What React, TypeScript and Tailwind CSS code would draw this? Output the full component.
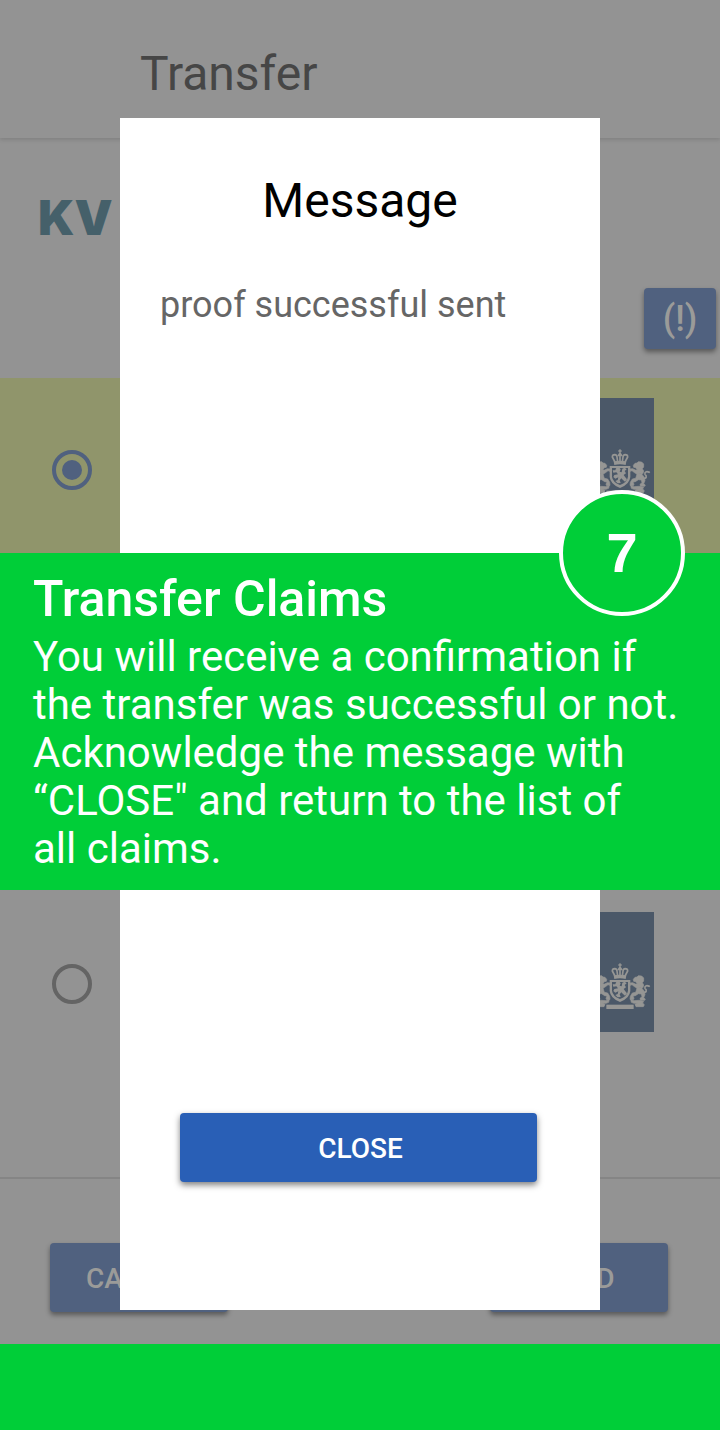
import type { ReactNode } from "react";

function LionSide() {
  return (
    <g stroke="currentColor" strokeWidth="2">
      <path d="M106 58 L111 52 L117 51 L121 47 L131 48 L137 54 L137 63 L133 68 L137 75 L135 82 L130 87 L126 82 L119 86 L108 79 L102 74 L97 76 L96 69 L104 68 L112 72 L118 72 L113 65 L107 64 Z" />
      <path d="M118 82 L130 84 L138 92 L141 104 L137 113 L142 117 L140 121 L127 121 L126 115 L132 110 L130 102 L121 101 L112 107 L105 108 L108 115 L106 119 L96 118 L97 109 L103 99 L113 97 Z" />
      <path d="M134 98 C147 98 147 90 141 85 C139 78 146 75 153 79 L155 77" fill="none" strokeWidth="5" />
      <path d="M98 118 L108 122 L122 121 L137 124 L134 129 L139 134 L136 140 L114 140 L111 133 L118 130 L108 130 L100 127 Z" />
    </g>
  );
}

function Crest() {
  return (
    <svg viewBox="-12 36 204 360" className="h-30 w-17 shrink-0 bg-[#4b5868] text-[#969694]" fill="currentColor" aria-hidden="true">
      <g transform="translate(24 180)">
        <path d="M64 10 h4 v3 h3 v4 h-3 v5 h-4 v-5 h-3 v-4 h3 Z" />
        <g fill="none" stroke="currentColor" strokeWidth="5" strokeLinejoin="round">
          <path d="M51 48 L43 33 Q43 26 50 26 Q57 27 57 33 L59 48" />
          <path d="M81 48 L89 33 Q89 26 82 26 Q75 27 75 33 L73 48" />
          <path d="M66 22 V48 M60 30 L66 22 L72 30" />
        </g>
        <path d="M47 46 Q66 42 85 46 L83 57 Q66 53 49 57 Z" />
        <path
          fillRule="evenodd"
          d="M35 60 H97 V93 Q95 115 66 126 Q37 115 35 93 Z M42 66 V92 Q44 108 66 117 Q88 108 90 92 V66 Z"
        />
        <path d="M54 67 L63 64 L68 70 L65 77 L71 79 L73 68 L80 65 L86 70 L80 75 L84 82 L77 87 L82 94 L87 100 L81 107 L75 102 L70 97 L65 103 L68 111 L59 112 L52 105 L59 102 L61 94 L52 98 L46 93 L49 87 L60 85 L55 79 L46 80 L44 73 L52 73 Z" />
        <LionSide />
        <g transform="translate(132 0) scale(-1 1)">
          <LionSide />
        </g>
        <path d="M25 134 H107 V147 H25 Z" />
      </g>
    </svg>
  );
}

function ClaimRow({ label, checked, className }: { label: string; checked: boolean; className: string }) {
  return (
    <li className={`flex items-start justify-between pt-5 pr-[66px] pl-[52px] ${className}`}>
      <input
        type="radio"
        name="claim"
        aria-label={label}
        defaultChecked={checked}
        className="mt-[52px] size-10 appearance-none rounded-full border-4 border-[#646464] p-1.5 checked:border-[#50617f] checked:bg-[#50617f] bg-clip-content"
      />
      <Crest />
    </li>
  );
}

function DimButton({ children, className }: { children: ReactNode; className: string }) {
  return (
    <button type="button" className={`rounded-sm bg-[#50617f] font-medium text-[#9b9b99] shadow-[0_3px_5px_rgba(0,0,0,0.4)] ${className}`}>
      {children}
    </button>
  );
}

export default function App() {
  return (
    <div className="relative bg-[#939393] font-[Roboto,sans-serif]">
      <header className="flex h-[138px] items-end px-[140px] pb-9 shadow-[0_2px_4px_rgba(0,0,0,0.12)]">
        <h1 className="text-5xl leading-[56px] text-[#464646]">Transfer</h1>
      </header>

      <main>
        <section className="flex h-60 items-start justify-between pr-1 pl-[38px]">
          <div className="pt-[54px] font-[Inter,sans-serif] text-5xl leading-[52px] font-black text-[#45606a]">KV</div>
          <DimButton className="mt-[150px] h-[61px] w-[72px] text-4xl">(!)</DimButton>
        </section>

        <ul className="border-b-2 border-[#858585]">
          <ClaimRow label="First claim" checked className="h-[257px] bg-[#90956b]" />
          <li className="h-[257px]" />
          <ClaimRow label="Third claim" checked={false} className="h-[285px]" />
        </ul>

        <div className="flex h-[165px] items-start justify-between pt-16 pr-[52px] pl-[50px]">
          <DimButton className="h-[69px] w-[178px] pt-0.5 text-[28px]">CANCEL</DimButton>
          <DimButton className="h-[69px] w-[178px] pt-0.5 text-[28px]">SEND</DimButton>
        </div>
      </main>

      <footer className="h-[86px] bg-[#00ce38]" />

      <div
        role="dialog"
        aria-labelledby="message-title"
        className="absolute inset-x-0 top-[118px] bottom-[120px] mx-auto flex w-2/3 flex-col bg-white px-10 pt-[55px] pb-32"
      >
        <h2 id="message-title" className="text-center text-5xl leading-[56px] text-black">
          Message
        </h2>
        <p className="mt-14 text-4xl leading-10 text-[#666666]">proof successful sent</p>
        <button
          type="button"
          className="mr-[23px] ml-5 mt-auto h-[69px] rounded-sm bg-[#295fb6] pt-0.5 pl-1 text-[28px] font-medium text-white shadow-[0_3px_6px_rgba(0,0,0,0.5)]"
        >
          CLOSE
        </button>
      </div>

      <section className="absolute inset-x-0 top-[553px] bg-[#00ce38] px-[33px] pt-[18px] pb-[17px] text-white">
        <h2 className="text-[50px] leading-[56px] font-medium">Transfer Claims</h2>
        <p className="pt-1.5 text-[42px] leading-12 whitespace-nowrap">
          You will receive a confirmation if
          <br />
          the transfer was successful or not.
          <br />
          Acknowledge the message with
          <br />
          “CLOSE" and return to the list of
          <br />
          all claims.
        </p>
        <div className="absolute -top-[63px] right-[35px] flex size-[126px] items-center justify-center rounded-full border-4 border-white bg-[#00ce38] font-['Liberation_Sans',sans-serif] text-[56px] leading-none font-bold">
          7
        </div>
      </section>
    </div>
  );
}
